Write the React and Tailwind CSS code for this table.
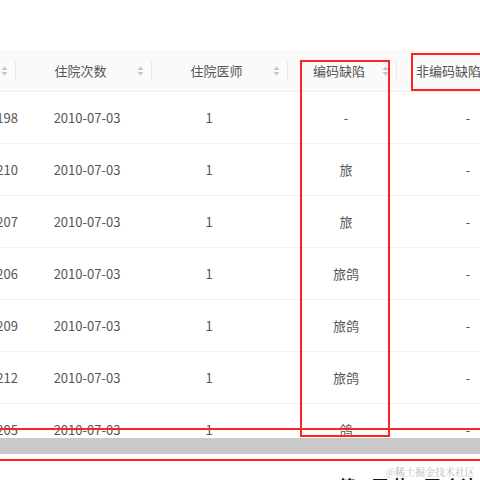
import React from "react";

const rows = [
  { id: "1000198", date: "2010-07-03", doc: "1", code: "-", other: "-" },
  { id: "1000210", date: "2010-07-03", doc: "1", code: "旅", other: "-" },
  { id: "1000207", date: "2010-07-03", doc: "1", code: "旅", other: "-" },
  { id: "1000206", date: "2010-07-03", doc: "1", code: "旅鸽", other: "-" },
  { id: "1000209", date: "2010-07-03", doc: "1", code: "旅鸽", other: "-" },
  { id: "1000212", date: "2010-07-03", doc: "1", code: "旅鸽", other: "-" },
  { id: "1000205", date: "2010-07-03", doc: "1", code: "鸽", other: "-" },
];

function Sorter() {
  return (
    <svg width="7" height="10" viewBox="0 0 7 10" className="ml-2 shrink-0">
      <polygon points="0.5,4 3.5,0.6 6.5,4" fill="#c4c4c4" />
      <polygon points="0.5,6 3.5,9.4 6.5,6" fill="#c4c4c4" />
    </svg>
  );
}

function HeadCell({ title, width }) {
  return (
    <div className={`flex items-center pl-4 shrink-0 ${width}`}>
      <div className="flex-1 text-center whitespace-nowrap">{title}</div>
      <Sorter />
      <div className="ml-[7px] w-px h-[21px] bg-[#ebebeb]" />
    </div>
  );
}

export default function App() {
  return (
    <div className="w-[480px] h-[480px] overflow-hidden bg-white relative text-[13px] text-[#555] font-['Noto_Sans_CJK_SC','Noto_Sans',sans-serif]">
      <div className="h-[50px]" />

      {/* TABLE */}
      <div className="h-[388px] overflow-hidden">
        <div className="flex h-[42px] bg-[#fafafa] border-b border-[#f0f0f0] -ml-[120px] w-[700px]">
          <HeadCell title="住院号" width="w-[136px]" />
          <HeadCell title="住院次数" width="w-[136px]" />
          <HeadCell title="住院医师" width="w-[136px]" />
          <HeadCell title="编码缺陷" width="w-[109px]" />
          <div className="flex items-center pl-[19px] whitespace-nowrap">非编码缺陷</div>
        </div>

        {rows.map((r, i) => (
          <div
            key={i}
            className="grid grid-cols-[140px_134px_110px_164px_80px] items-center h-[52px] border-b border-[#f0f0f0] -ml-[120px] w-[700px]"
          >
            <div className="text-right pr-[2px]">{r.id}</div>
            <div className="text-center">{r.date}</div>
            <div className="text-center">{r.doc}</div>
            <div className="text-center">{r.code}</div>
            <div className="text-center">{r.other}</div>
          </div>
        ))}
      </div>

      {/* SCROLLBAR */}
      <div className="h-[16px] bg-[#c9c9c9]" />

      <div className="flex justify-end pr-[4px] pt-[19px]">
        <span className="text-[16px] font-bold text-[#111] whitespace-nowrap">第 1 页 共 5 页 合计</span>
      </div>

      {/* ANNOTATIONS */}
      <div className="absolute left-[300px] top-[60px] w-[90px] h-[377px] border-2 border-[#f22]" />
      <div className="absolute left-[411px] top-[53px] w-[80px] h-[38px] border-2 border-[#f22]" />
      <div className="absolute left-0 top-[428px] w-full h-[2px] bg-[#f22]" />
      <div className="absolute left-0 top-[459px] w-full h-[2px] bg-[#f22]" />
      <div className="absolute left-[386px] top-[464px] text-[10px] text-[#b8b8b8] whitespace-nowrap font-['Noto_Serif_CJK_SC','Noto_Sans_CJK_SC',serif] [text-shadow:0_0_2px_#fff]">
        @稀土掘金技术社区
      </div>
    </div>
  );
}
